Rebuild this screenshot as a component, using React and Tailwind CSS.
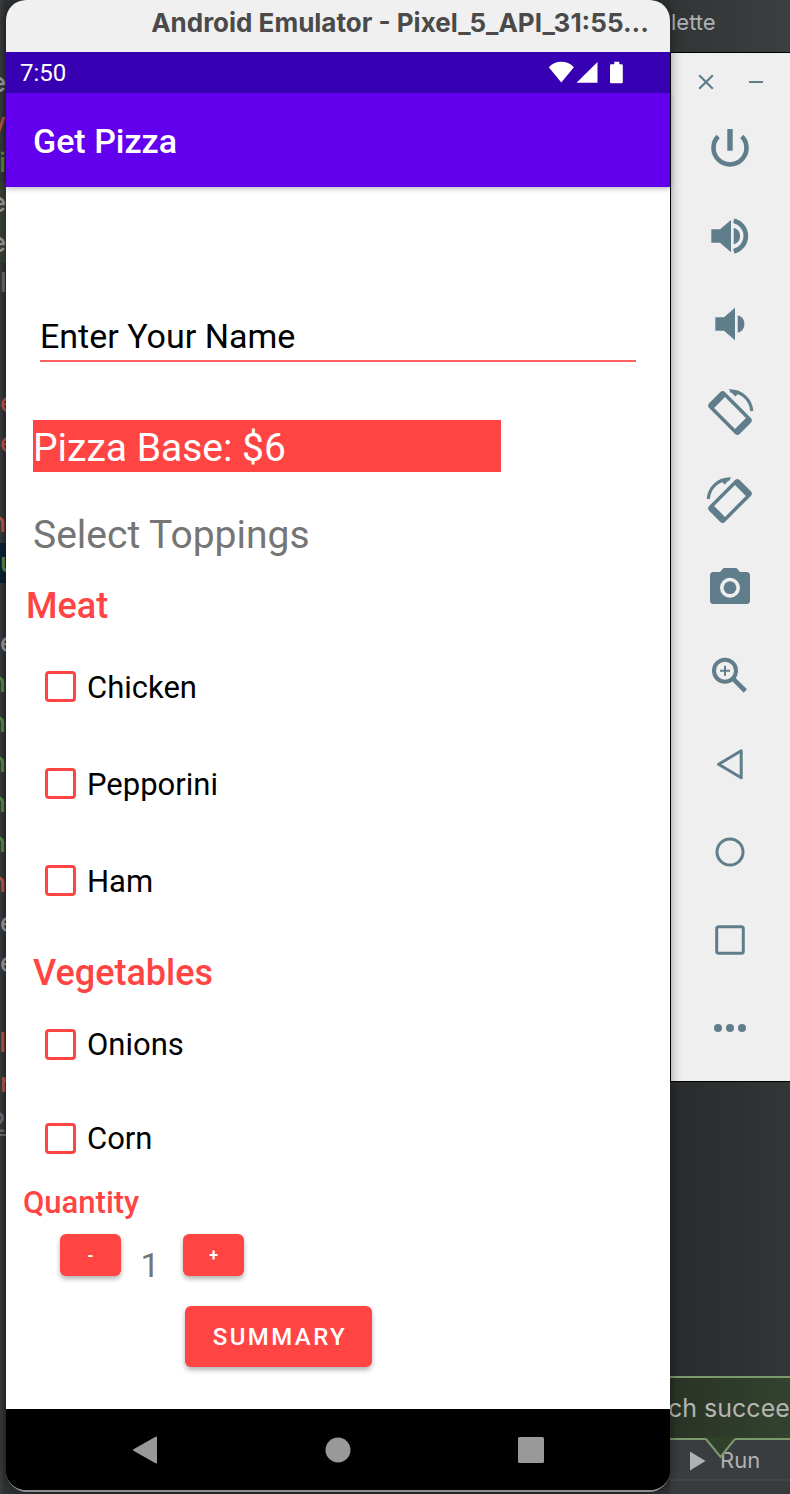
import React from "react";

const CODE_LINES = [
  { text: "e", tone: "text-[#9b9ea0]", end: true },
  { text: "y", tone: "text-[#b8584a]", end: true },
  { text: "i", tone: "text-[#5a8f48]", end: true },
  { text: "e", tone: "text-[#9b9ea0]", bg: "bg-[#3a4138]", end: true },
  { text: "e", tone: "text-[#9b9ea0]", bg: "bg-[#3a4138]", end: true },
  { text: "l", tone: "text-[#6d7072]" },
  { text: "" },
  { text: "" },
  { text: "e", tone: "text-[#b8584a]" },
  { text: "e", tone: "text-[#b8584a]" },
  { text: "" },
  { text: "n", tone: "text-[#b8584a]", end: true },
  { text: "u", tone: "text-[#5a8f48]", bg: "bg-[#0c2236]" },
  { text: "" },
  { text: "e", tone: "text-[#9b9ea0]" },
  { text: "n", tone: "text-[#5a8f48]", end: true },
  { text: "n", tone: "text-[#5a8f48]", end: true },
  { text: "n", tone: "text-[#5a8f48]", end: true },
  { text: "n", tone: "text-[#5a8f48]", end: true },
  { text: "n", tone: "text-[#5a8f48]", end: true },
  { text: "n", tone: "text-[#b8584a]", end: true },
  { text: "e", tone: "text-[#9b9ea0]" },
  { text: "e", tone: "text-[#9b9ea0]" },
  { text: "" },
  { text: "l", tone: "text-[#b8584a]", end: true },
  { text: "r", tone: "text-[#b8584a]" },
  { text: "2", tone: "text-[#6d7072] underline", end: true },
];

function EditorStrip() {
  return (
    <div className="w-[6px] shrink-0 overflow-hidden bg-gradient-to-r from-[#3a3d3f] to-[#2d2f31] pt-[63px] font-[Inter,sans-serif] text-[27px] font-medium leading-10">
      {CODE_LINES.map((line, i) => (
        <div
          key={i}
          className={`flex h-10 w-full ${line.end ? "justify-end" : "justify-start"} ${line.bg || ""} ${line.tone || ""}`}
        >
          {line.text}
        </div>
      ))}
    </div>
  );
}

function StatusBar() {
  return (
    <div className="flex h-[41px] items-center justify-between bg-[#3700b3] pl-[14px] pr-[46px] text-white">
      <span className="text-2xl">7:50</span>
      <svg width="76" height="24" viewBox="0 0 76 24" fill="currentColor" aria-hidden="true">
        <path d="M13.3 21.6 0.8 6.2C4.2 2.6 8.6 0.8 13.3 0.8S22.4 2.6 25.9 6.2Z" />
        <path d="M49.5 1v20.7H28.5Z" />
        <path d="M66.3 0.8h5v2.4h2.3a1.2 1.2 0 0 1 1.2 1.2V21a1.2 1.2 0 0 1-1.2 1.2H63.2A1.2 1.2 0 0 1 62 21V4.4a1.2 1.2 0 0 1 1.2-1.2h3.1z" />
      </svg>
    </div>
  );
}

function Topping({ name, tall }) {
  return (
    <label className={`flex items-center gap-[11px] pl-[39px] text-[31px] text-black ${tall ? "h-[97px]" : "h-[94px]"}`}>
      <input
        type="checkbox"
        className="size-[31px] appearance-none rounded-[4px] border-[3px] border-[#ff4444] bg-white checked:bg-[#ff4444]"
      />
      <span className="pt-[3px]">{name}</span>
    </label>
  );
}

function PizzaForm() {
  const [count, setCount] = React.useState(1);
  const step = "h-[42px] w-[61px] rounded-md bg-[#ff4444] pt-[2px] text-base font-bold text-white shadow-[0_3px_5px_rgba(0,0,0,0.3)]";
  return (
    <form className="flex flex-col bg-white pb-[42px] pt-[123px]" onSubmit={(e) => e.preventDefault()}>
      <input
        type="text"
        aria-label="Enter Your Name"
        defaultValue="Enter Your Name"
        className="mx-[34px] h-[52px] border-b-2 border-[#ff6060] pt-px text-[34px] text-black outline-none"
      />
      <p className="ml-[27px] mr-[169px] mt-[58px] h-[52px] bg-[#ff4444] text-[39px] leading-[56px] text-white">Pizza Base: $6</p>
      <p className="mt-9 h-[52px] pl-[27px] text-[39px] leading-[54px] text-[#757575]">Select Toppings</p>
      <h2 className="mt-[26px] pl-[20px] text-[36px] font-medium leading-10 text-[#ff4444]">Meat</h2>
      <div className="mt-3 flex flex-col">
        <Topping name="Chicken" tall />
        <Topping name="Pepporini" tall />
        <Topping name="Ham" tall />
      </div>
      <h2 className="mt-6 pl-[27px] text-[36px] font-medium leading-10 text-[#ff4444]">Vegetables</h2>
      <div className="mt-1 flex flex-col">
        <Topping name="Onions" />
        <Topping name="Corn" />
      </div>
      <h2 className="pl-[17px] text-[31px] font-medium leading-9 text-[#ff4444]">Quantity</h2>
      <div className="mt-[13px] flex items-start pl-[54px]">
        <button type="button" aria-label="Decrease" className={step} onClick={() => setCount(Math.max(1, count - 1))}>-</button>
        <output className="w-[62px] pr-1 pt-[11px] text-center text-[34px] leading-10 text-[#757575]">{count}</output>
        <button type="button" aria-label="Increase" className={step} onClick={() => setCount(count + 1)}>+</button>
      </div>
      <button
        type="submit"
        className="ml-[179px] mt-[21px] h-[61px] w-[187px] rounded-md bg-[#ff4444] pl-[3px] text-2xl font-medium tracking-widest text-white shadow-[0_3px_5px_rgba(0,0,0,0.3)]"
      >
        SUMMARY
      </button>
    </form>
  );
}

function NavBar() {
  return (
    <nav className="flex h-[81px] items-center justify-between rounded-b-[20px] bg-black px-[126px] text-[#999]" aria-label="System">
      <button type="button" aria-label="Back">
        <svg width="26" height="28" viewBox="0 0 26 28" fill="currentColor" stroke="currentColor" strokeWidth="2" strokeLinejoin="round">
          <path d="M2 14 24 1.5v25z" />
        </svg>
      </button>
      <button type="button" aria-label="Home">
        <svg width="26" height="26" viewBox="0 0 26 26" fill="currentColor"><circle cx="13" cy="13" r="12.5" /></svg>
      </button>
      <button type="button" aria-label="Overview">
        <svg width="26" height="26" viewBox="0 0 26 26" fill="currentColor"><rect width="26" height="26" rx="1.5" /></svg>
      </button>
    </nav>
  );
}

const rotateShapes = (
  <>
    <g transform="rotate(45 24 25)">
      <path
        fill="currentColor"
        fillRule="evenodd"
        d="M6 13.8h36a3.600 3.600 0 0 1 3.600 3.600v15.200a3.600 3.600 0 0 1-3.600 3.600H6a3.600 3.600 0 0 1-3.600-3.600V17.400A3.600 3.600 0 0 1 6 13.800zM9.200 17.300v15.400h29.600V17.300z"
      />
    </g>
    <path fill="none" stroke="currentColor" strokeWidth="3.2" d="M24 2.800A22 22 0 0 1 45.800 23" />
    <path fill="currentColor" d="M22.500 1.200 29.300 8.600 34 4z" />
  </>
);

const TOOLS = [
  {
    label: "Power",
    art: (
      <g fill="none" stroke="currentColor">
        <path strokeWidth="4.6" d="M12.2 12.4a16.5 16.5 0 1 0 23.6 0" />
        <path strokeWidth="5.4" d="M24 5v21.7" />
      </g>
    ),
  },
  {
    label: "Volume up",
    art: (
      <>
        <path fill="currentColor" d="M5.3 17.3H14L25 8v32.3L14 30.7H5.3zM27.7 15.7a8.6 8.6 0 0 1 0 16.6z" />
        <path fill="none" stroke="currentColor" strokeWidth="4.6" d="M27.7 8.7a15.7 15.7 0 0 1 0 30.6" />
      </>
    ),
  },
  {
    label: "Volume down",
    art: <path fill="currentColor" d="M9.3 17.3H18L29 7.7v32.6L18 30.7H9.3zM31.7 15.3a9 9 0 0 1 0 17.4z" />,
  },
  { label: "Rotate left", art: rotateShapes },
  { label: "Rotate right", art: <g transform="matrix(-1 0 0 1 48 0)">{rotateShapes}</g> },
  {
    label: "Take screenshot",
    art: (
      <>
        <path
          fill="currentColor"
          fillRule="evenodd"
          d="M17.6 4 14 8H7.5A3.5 3.5 0 0 0 4 11.5v25A3.5 3.5 0 0 0 7.5 40h33a3.5 3.5 0 0 0 3.5-3.5v-25A3.5 3.5 0 0 0 40.5 8H34l-3.6-4zM24 13.7a10 10 0 1 1 0 20 10 10 0 0 1 0-20z"
        />
        <circle cx="24" cy="23.7" r="6.4" fill="currentColor" />
      </>
    ),
  },
  {
    label: "Zoom",
    art: (
      <g fill="none" stroke="currentColor">
        <circle cx="19" cy="18.7" r="11" strokeWidth="4" />
        <path strokeWidth="2" d="M14 18.7h10M19 13.7v10" />
        <path strokeWidth="4.6" d="M27.5 27.2 39.3 39" />
      </g>
    ),
  },
  {
    label: "Back",
    art: <path fill="none" stroke="currentColor" strokeWidth="3" strokeLinejoin="round" d="M12.6 24.3 35.2 10.8v27z" />,
  },
  { label: "Home", art: <circle cx="24" cy="24" r="13" fill="none" stroke="currentColor" strokeWidth="3" /> },
  {
    label: "Overview",
    art: <rect x="10.7" y="10.7" width="26.6" height="26.6" rx="2" fill="none" stroke="currentColor" strokeWidth="3" />,
  },
  {
    label: "More",
    art: (
      <g fill="currentColor">
        <circle cx="12" cy="24" r="4" />
        <circle cx="24" cy="24" r="4" />
        <circle cx="36" cy="24" r="4" />
      </g>
    ),
  },
];

function ToolPanel() {
  return (
    <aside className="border-y border-l border-black bg-[#efefef] pb-[9px] text-[#607d8b]">
      <div className="flex h-[51px] items-center gap-8 pl-[26px] pt-[6px]">
        <button type="button" aria-label="Close">
          <svg width="18" height="18" viewBox="0 0 18 18" fill="none" stroke="currentColor" strokeWidth="2.2"><path d="M2.2 2.2l13.6 13.6M15.8 2.2 2.2 15.8" /></svg>
        </button>
        <button type="button" aria-label="Minimize">
          <svg width="18" height="18" viewBox="0 0 18 18" fill="none" stroke="currentColor" strokeWidth="2"><path d="M2 9h14" /></svg>
        </button>
      </div>
      {TOOLS.map((tool) => (
        <button key={tool.label} type="button" aria-label={tool.label} className="flex h-[88px] w-full items-center pl-[35px]">
          <svg width="48" height="48" viewBox="0 0 48 48">{tool.art}</svg>
        </button>
      ))}
    </aside>
  );
}

function SideColumn() {
  return (
    <div className="flex w-[120px] shrink-0 flex-col overflow-hidden bg-gradient-to-r from-[#292b2c] to-[#323637] font-[Inter,sans-serif]">
      <div className="flex h-[52px] items-center overflow-hidden bg-gradient-to-r from-[#323535] to-[#3c3f41] pb-2 pl-px text-[22px] text-[#afb1b3]">lette</div>
      <ToolPanel />
      <div className="flex-1" />
      <div className="relative h-16 border-y-2 border-[#7a9a6c] bg-gradient-to-r from-[#2a3326] to-[#33422e]">
        <p className="-ml-[2px] whitespace-nowrap text-[25px] leading-[60px] text-[#b4b5b3]">ch succee</p>
        <svg className="absolute left-[35px] top-[59px]" width="32" height="22" viewBox="0 0 32 22" aria-hidden="true">
          <path d="M1 0h29v3L15.5 20 1 3z" fill="#30402b" />
          <path d="M1 2l14.5 18L30 2" fill="none" stroke="#7a9a6c" strokeWidth="2" />
        </svg>
      </div>
      <button type="button" className="flex h-[41px] items-center gap-[14px] border-b-2 border-[#444443] bg-[#3a3d3f] pl-[19px] pt-[2px] text-[22px] text-[#afb1b3]">
        <svg width="17" height="20" viewBox="0 0 17 20" fill="currentColor" aria-hidden="true"><path d="M1 0.5 16.5 10 1 19.5z" /></svg>
        Run
      </button>
      <div className="h-[13px] bg-[#383b3d]" />
    </div>
  );
}

export default function App() {
  return (
    <div className="flex min-h-screen bg-[#2f3233] font-[Roboto,sans-serif]">
      <EditorStrip />
      <main className="min-w-0 flex-1">
        <div className="relative z-10 rounded-b-[21px] rounded-t-[20px] border-b-2 border-[#8f8f8f] bg-black shadow-[0_0_12px_rgba(0,0,0,0.45)]">
          <header className="h-[52px] rounded-t-[20px] bg-[#f0f0f0] pr-[21px] text-right font-[Inter,sans-serif] text-[26px] font-bold leading-[46px] text-[#4a4a4a]">
            <span className="block truncate">Android Emulator - Pixel_5_API_31:55...</span>
          </header>
          <StatusBar />
          <h1 className="relative flex h-[94px] items-center bg-[#6200ee] pl-[27px] pt-[2px] text-[34px] font-medium text-white shadow-[0_2px_5px_rgba(0,0,0,0.25)]">
            Get Pizza
          </h1>
          <PizzaForm />
          <NavBar />
        </div>
      </main>
      <SideColumn />
    </div>
  );
}
